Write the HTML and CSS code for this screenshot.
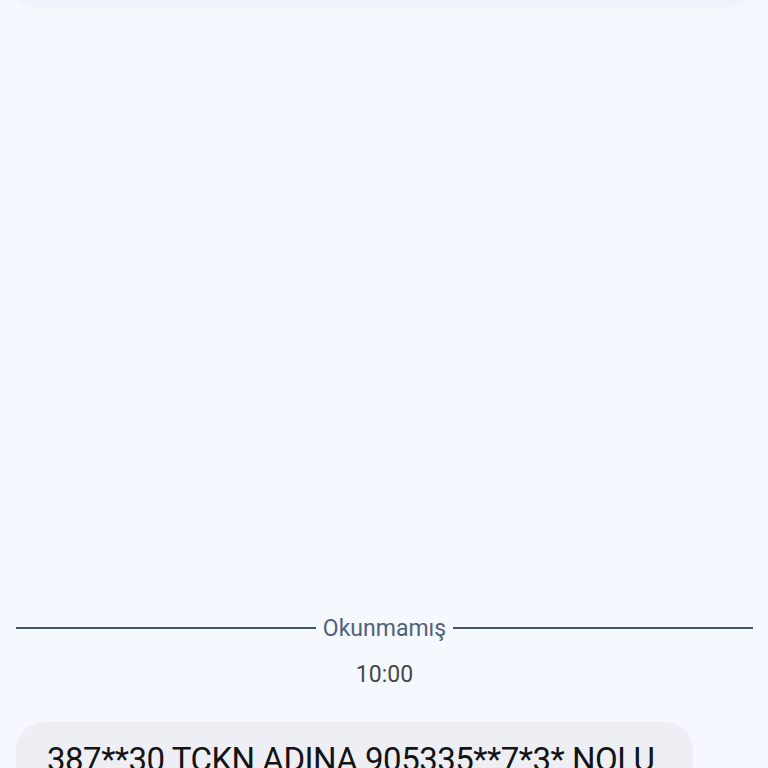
FILE: index.html
```html
<!DOCTYPE html>
<html lang="tr">
<head>
    <meta charset="UTF-8">
    <meta name="viewport" content="width=device-width, initial-scale=1.0">
    <title>Mesajlar</title>
    <link rel="stylesheet" href="styles.css">
</head>
<body>
    <div class="thread">
        <div class="bubble bubble-prev"></div>
        <div class="divider">
            <span class="divider-line"></span>
            <span class="divider-label">Okunmamış</span>
            <span class="divider-line"></span>
        </div>
        <div class="time">10:00</div>
        <div class="bubble bubble-in">
            <p class="bubble-text">387**30 TCKN ADINA 905335**7*3* NOLU HAT ABONELİĞİ BAŞLATILMIŞTIR.</p>
        </div>
    </div>
</body>
</html>
```

FILE: styles.css
```css
body {
    margin: 0;
    background-color: #f5f8fe;
    font-family: Roboto, 'Noto Sans', sans-serif;
    overflow: hidden;
}
.thread {
    height: 768px;
    padding: 0 15px 0 16px;
    display: flex;
    flex-direction: column;
}
.thread > * {
    flex-shrink: 0;
}
.bubble-prev {
    height: 47px;
    margin-top: -40px;
    margin-left: -4px;
    background: #eff3fc;
    border-radius: 22px;
}
.divider {
    display: flex;
    align-items: center;
    gap: 7px;
    margin-top: 607px;
    height: 28px;
}
.divider-line {
    flex: 1;
    height: 1.5px;
    background: #42546a;
}
.divider-label {
    font-size: 23px;
    color: #50627a;
}
.time {
    text-align: center;
    font-size: 23px;
    line-height: 26px;
    color: #474747;
    margin-top: 20px;
}
.bubble-in {
    margin-top: 34px;
    width: 677px;
    background: #eeeff4;
    border-radius: 28px;
    padding: 16px 31px;
    box-sizing: border-box;
}
.bubble-text {
    margin: 0;
    font-size: 33px;
    line-height: 44px;
    letter-spacing: -0.5px;
    color: #141414;
}
```
